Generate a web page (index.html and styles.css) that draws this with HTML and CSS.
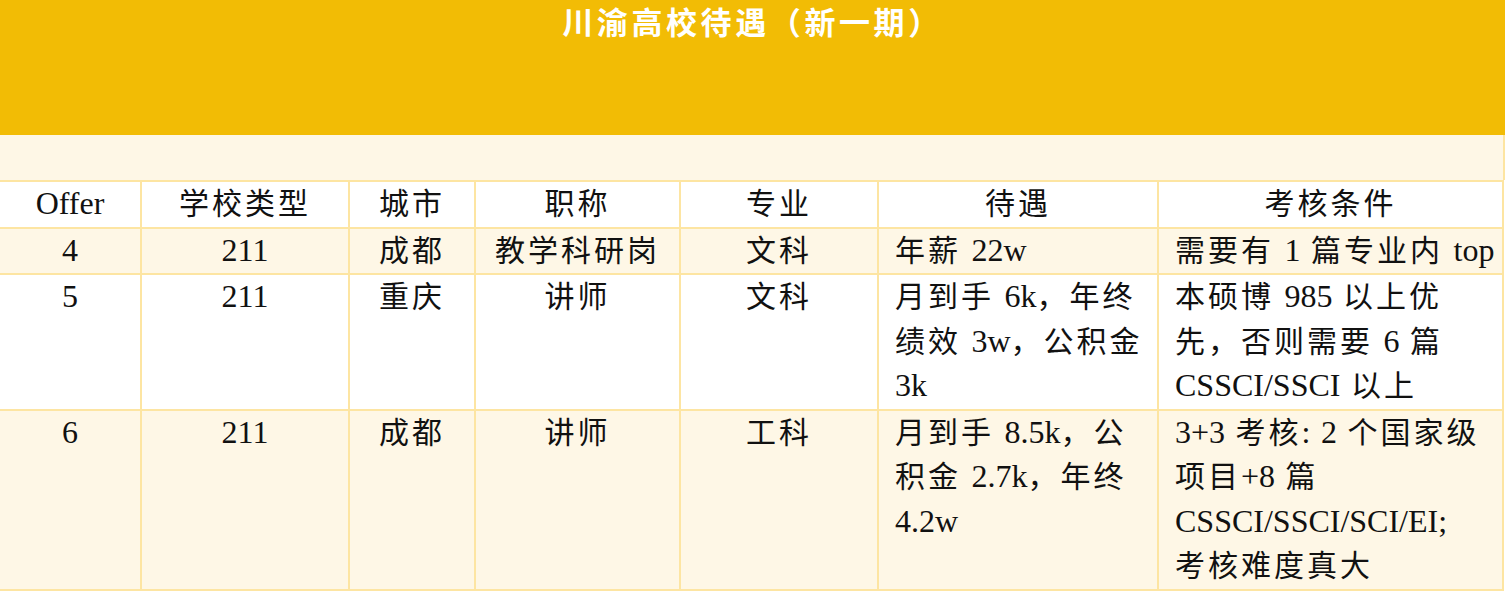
FILE: index.html
```html
<!DOCTYPE html>
<html lang="zh-CN">
<head>
<meta charset="utf-8">
<title>川渝高校待遇（新一期）</title>
<link rel="stylesheet" href="styles.css">
</head>
<body>
<div class="banner"><h1 class="title">川渝高校待遇（新一期）</h1></div>
<div class="band"></div>
<table class="grid">
  <colgroup>
    <col class="c1"><col class="c2"><col class="c3"><col class="c4"><col class="c5"><col class="c6"><col class="c7">
  </colgroup>
  <thead>
    <tr class="head">
      <th><span class="lat">Offer</span></th><th>学校类型</th><th>城市</th><th>职称</th><th>专业</th><th>待遇</th><th>考核条件</th>
    </tr>
  </thead>
  <tbody>
    <tr class="alt">
      <td><span class="lat">4</span></td><td><span class="lat">211</span></td><td>成都</td><td>教学科研岗</td><td>文科</td>
      <td class="left">年薪 <span class="lat">22w</span></td>
      <td class="left">需要有 <span class="lat">1</span> 篇专业内 <span class="lat">top</span></td>
    </tr>
    <tr>
      <td><span class="lat">5</span></td><td><span class="lat">211</span></td><td>重庆</td><td>讲师</td><td>文科</td>
      <td class="left">月到手 <span class="lat">6k</span>，年终<br>绩效 <span class="lat">3w</span>，公积金<br><span class="lat">3k</span></td>
      <td class="left">本硕博 <span class="lat">985</span> 以上优<br>先，否则需要 <span class="lat">6</span> 篇<br><span class="lat">CSSCI/SSCI</span> 以上</td>
    </tr>
    <tr class="alt">
      <td><span class="lat">6</span></td><td><span class="lat">211</span></td><td>成都</td><td>讲师</td><td>工科</td>
      <td class="left">月到手 <span class="lat">8.5k</span>，公<br>积金 <span class="lat">2.7k</span>，年终<br><span class="lat">4.2w</span></td>
      <td class="left"><span class="lat">3+3</span> 考核<span class="lat">:</span> <span class="lat">2</span> 个国家级<br>项目<span class="lat">+8</span> 篇<br><span class="lat">CSSCI/SSCI/SCI/EI;</span><br>考核难度真大</td>
    </tr>
  </tbody>
</table>
</body>
</html>
```

FILE: styles.css
```css
html, body {
  margin: 0;
  padding: 0;
  background: #ffffff;
}

.banner {
  height: 135px;
  background: #f2bc05;
}

.title {
  margin: 0;
  text-align: center;
  color: #ffffff;
  font-family: "Noto Sans CJK SC", "Noto Sans", sans-serif;
  font-weight: 700;
  font-size: 31px;
  letter-spacing: 3.6px;
  line-height: 42px;
}

.band {
  height: 45px;
  background: #fef7e6;
  border-right: 2px solid #fde5a2;
  box-sizing: border-box;
}

.grid {
  border-collapse: collapse;
  table-layout: fixed;
  width: 1504px;
  font-family: "Liberation Serif", "Noto Sans CJK SC", serif;
  font-size: 30px;
  letter-spacing: 3px;
  color: #111111;
}

.c1 { width: 141px; }
.c2 { width: 208px; }
.c3 { width: 126px; }
.c4 { width: 205px; }
.c5 { width: 198px; }
.c6 { width: 280px; }
.c7 { width: 345px; }

.grid th,
.grid td {
  border: 2px solid #fde5a2;
  padding: 0;
  line-height: 44.5px;
  text-align: center;
  vertical-align: top;
  font-weight: 400;
  white-space: nowrap;
}

.grid th:first-child,
.grid td:first-child {
  border-left: none;
}

.grid td.left {
  text-align: left;
  padding-left: 16px;
}

.lat {
  font-size: 32px;
  letter-spacing: 0;
  line-height: 0;
}

.alt td {
  background: #fef7e6;
}
```
